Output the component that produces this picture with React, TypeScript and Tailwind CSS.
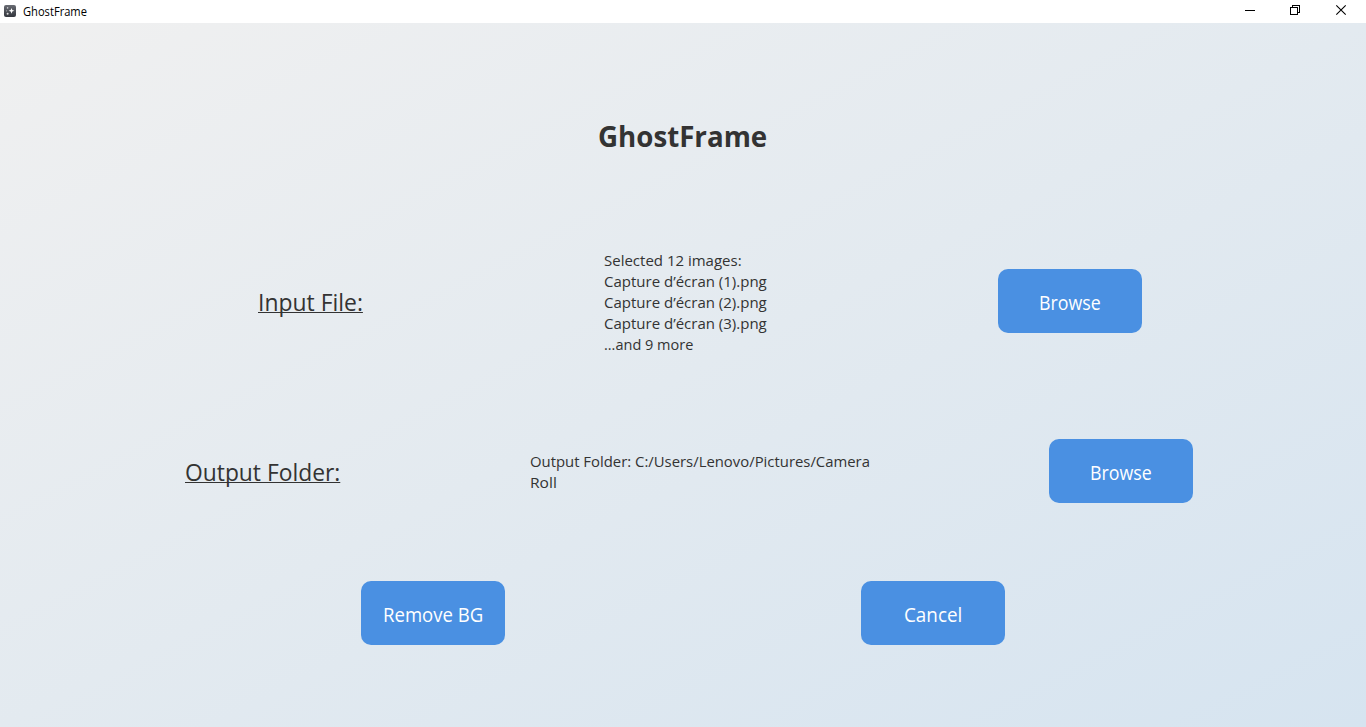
import React from "react";

function FitText({
  text,
  width,
  size,
  className = "",
}: {
  text: string;
  width: number;
  size: number;
  className?: string;
}) {
  const ref = React.useRef<HTMLSpanElement>(null);
  const [scale, setScale] = React.useState(1);
  React.useLayoutEffect(() => {
    if (ref.current) {
      setScale(width / ref.current.offsetWidth);
    }
  }, [text, width, size]);
  return (
    <span className="inline-block" style={{ width }}>
      <span
        ref={ref}
        className={`inline-block origin-left whitespace-nowrap ${className}`}
        style={{ fontSize: size, transform: `scaleX(${scale})` }}
      >
        {text}
      </span>
    </span>
  );
}

function Button({ label, width }: { label: string; width: number }) {
  return (
    <button
      type="button"
      className="flex h-16 w-36 items-center justify-center rounded-[10px] bg-[#4a90e2] pt-1 text-white"
    >
      <FitText text={label} width={width} size={19.5} />
    </button>
  );
}

function TitleBar() {
  return (
    <header className="flex h-[23px] shrink-0 items-center bg-white text-black">
      <svg className="-mt-px ml-1 h-3 w-3" viewBox="0 0 12 12">
        <defs>
          <linearGradient id="appIcon" x1="0" y1="0" x2="0" y2="1">
            <stop offset="0" stopColor="#686b72" />
            <stop offset="1" stopColor="#34373e" />
          </linearGradient>
        </defs>
        <rect width="12" height="12" rx="2" fill="url(#appIcon)" />
        <path d="M7.5 2.9 8.3 5l2.1.8-2.1.8-.8 2.2-.8-2.2-2.1-.8L6.7 5z" fill="#fff" />
        <circle cx="3.6" cy="2.9" r=".8" fill="#c9cacc" />
        <circle cx="2.6" cy="5.8" r=".6" fill="#a9abaf" />
        <circle cx="3.6" cy="8.7" r="1" fill="#dcdcdd" />
      </svg>
      <span className="ml-[7px] flex pb-0.5 leading-[18px]">
        <FitText text="GhostFrame" width={64} size={12} className="leading-[18px]" />
      </span>
      <div className="ml-auto flex h-full items-start">
        <svg className="h-[23px] w-[46px]" viewBox="0 0 46 23" shapeRendering="crispEdges">
          <path d="M18 10.5h10" stroke="#000" />
        </svg>
        <svg
          className="h-[23px] w-[46px]"
          viewBox="0 0 46 23"
          fill="none"
          stroke="#000"
          shapeRendering="crispEdges"
        >
          <path d="M17.5 7.5h7v7h-7zM19.5 7V5.5h7v7H25" />
        </svg>
        <svg className="h-[23px] w-[47px]" viewBox="0 0 47 23">
          <path d="m17.3 5.3 9.4 9.4m0-9.4-9.4 9.4" stroke="#000" strokeWidth="1.1" />
        </svg>
      </div>
    </header>
  );
}

const underlined = "underline decoration-1 underline-offset-[1px] [text-decoration-skip-ink:none]";

export default function App() {
  return (
    <div className="flex h-[727px] w-[1366px] flex-col overflow-hidden font-['Open_Sans','Noto_Sans',sans-serif] text-[#333]">
      <TitleBar />
      <main className="flex flex-1 flex-col bg-linear-to-br from-[#f0f0f0] to-[#d6e4f0]">
        <h1 className="flex h-[226px] items-center justify-center pt-px pr-0.5 leading-none">
          <FitText text="GhostFrame" width={169} size={28.5} className="font-bold" />
        </h1>
        <section className="flex h-[104px] items-center">
          <h2 className="ml-[258px] w-[346px] pt-0.5">
            <FitText text="Input File:" width={105} size={24} className={underlined} />
          </h2>
          <div className="flex w-[394px] flex-col items-start pt-0.5 leading-[21px]">
            <FitText text="Selected 12 images:" width={138} size={15} />
            <FitText text="Capture d’écran (1).png" width={163} size={15} />
            <FitText text="Capture d’écran (2).png" width={163} size={15} />
            <FitText text="Capture d’écran (3).png" width={163} size={15} />
            <FitText text="...and 9 more" width={89} size={15} />
          </div>
          <Button label="Browse" width={62} />
        </section>
        <section className="mt-[86px] flex h-16 items-center">
          <h2 className="ml-[185px] w-[345px] pt-0.5">
            <FitText text="Output Folder:" width={155} size={24} className={underlined} />
          </h2>
          <div className="flex w-[519px] flex-col items-start pt-0.5 leading-[21px]">
            <FitText
              text="Output Folder: C:/Users/Lenovo/Pictures/Camera"
              width={340}
              size={15}
            />
            <FitText text="Roll" width={27} size={15} />
          </div>
          <Button label="Browse" width={62} />
        </section>
        <section className="mt-[78px] flex gap-[356px] pl-[361px]">
          <Button label="Remove BG" width={100} />
          <Button label="Cancel" width={58} />
        </section>
      </main>
    </div>
  );
}
